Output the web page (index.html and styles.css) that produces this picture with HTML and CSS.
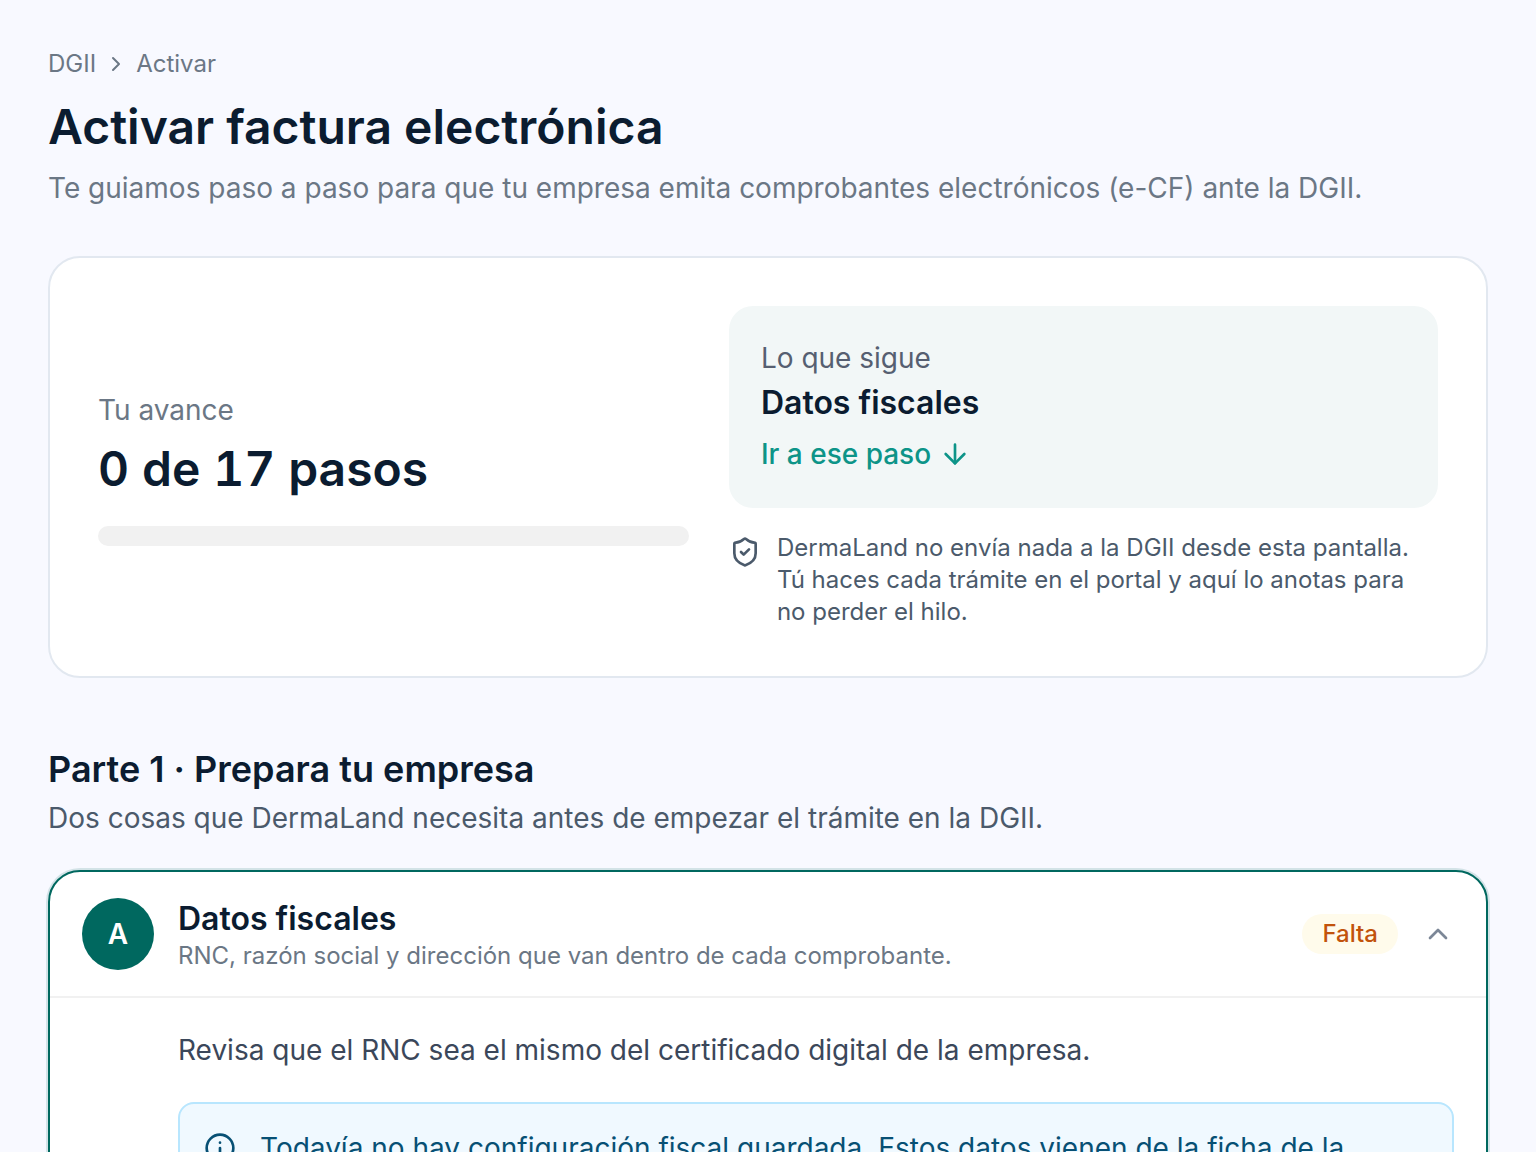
FILE: index.html
```html
<!DOCTYPE html>
<html lang="es">
<head>
    <meta charset="UTF-8">
    <meta name="viewport" content="width=device-width, initial-scale=1.0">
    <title>Activar factura electrónica</title>
    <link rel="stylesheet" href="styles.css">
</head>
<body>
    <main class="page">
        <header class="page-header">
            <nav class="breadcrumb" aria-label="Ruta">
                <a href="#">DGII</a>
                <svg class="icon icon-small" viewBox="0 0 24 24"><path d="m9 18 6-6-6-6"></path></svg>
                <span>Activar</span>
            </nav>
            <h1>Activar factura electrónica</h1>
            <p class="subtitle">Te guiamos paso a paso para que tu empresa emita comprobantes electrónicos (e-CF) ante la DGII.</p>
        </header>

        <section class="summary">
            <div class="progress">
                <p class="progress-label" id="progressLabel">Tu avance</p>
                <p class="progress-count">0 de 17 pasos</p>
                <div class="progress-bar" role="progressbar" aria-labelledby="progressLabel" aria-valuemin="0" aria-valuemax="17" aria-valuenow="0"></div>
            </div>
            <div class="summary-side">
                <div class="next-step">
                    <p class="next-label">Lo que sigue</p>
                    <p class="next-title">Datos fiscales</p>
                    <a class="next-link" href="#paso-a">
                        Ir a ese paso
                        <svg class="icon" viewBox="0 0 24 24"><path d="M12 5v14"></path><path d="m19 12-7 7-7-7"></path></svg>
                    </a>
                </div>
                <div class="note">
                    <svg class="icon" viewBox="0 0 24 24"><path d="M20 13c0 5-3.5 7.5-7.66 8.95a1 1 0 0 1-.67-.01C7.5 20.5 4 18 4 13V6a1 1 0 0 1 1-1c2 0 4.5-1.2 6.24-2.72a1.17 1.17 0 0 1 1.52 0C14.51 3.81 17 5 19 5a1 1 0 0 1 1 1z"></path><path d="m9 12 2 2 4-4"></path></svg>
                    <p>DermaLand no envía nada a la DGII desde esta pantalla. Tú haces cada trámite en el portal y aquí lo anotas para no perder el hilo.</p>
                </div>
            </div>
        </section>

        <section class="part">
            <h2>Parte 1 · Prepara tu empresa</h2>
            <p class="part-text">Dos cosas que DermaLand necesita antes de empezar el trámite en la DGII.</p>

            <article class="step" id="paso-a">
                <button type="button" class="step-header" aria-expanded="true" aria-controls="stepBody">
                    <span class="step-letter">A</span>
                    <span class="step-heading">
                        <span class="step-title">Datos fiscales</span>
                        <span class="step-desc">RNC, razón social y dirección que van dentro de cada comprobante.</span>
                    </span>
                    <span class="badge">Falta</span>
                    <svg class="icon step-chevron" viewBox="0 0 24 24"><path d="m18 15-6-6-6 6"></path></svg>
                </button>
                <div class="step-body" id="stepBody">
                    <p>Revisa que el RNC sea el mismo del certificado digital de la empresa.</p>
                    <div class="alert">
                        <svg class="icon" viewBox="0 0 24 24"><circle cx="12" cy="12" r="10"></circle><path d="M12 16v-4"></path><path d="M12 8h.01"></path></svg>
                        <p>Todavía no hay configuración fiscal guardada. Estos datos vienen de la ficha de la empresa.</p>
                    </div>
                </div>
            </article>
        </section>
    </main>
</body>
</html>
```
FILE: styles.css
```css
/* General Styles */
* {
    box-sizing: border-box;
}

body {
    margin: 0;
    font-family: 'Inter', sans-serif;
    font-size: 28px;
    line-height: 40px;
    background: #f8f9ff;
    color: #0b1c30;
}

h1, h2, p {
    margin: 0;
}

a {
    color: inherit;
    text-decoration: none;
}

.page {
    padding: 48px;
}

.icon {
    width: 32px;
    height: 32px;
    flex-shrink: 0;
    fill: none;
    stroke: currentColor;
    stroke-width: 2;
    stroke-linecap: round;
    stroke-linejoin: round;
}

.icon-small {
    width: 24px;
    height: 24px;
}

/* Page header */
.breadcrumb {
    display: flex;
    align-items: center;
    gap: 8px;
    margin-bottom: 16px;
    font-size: 24px;
    line-height: 32px;
    color: #6b7785;
}

h1 {
    font-size: 48px;
    line-height: 62px;
    font-weight: 600;
    margin-bottom: 10px;
}

.subtitle {
    color: #6b7785;
}

/* Progress summary */
.summary {
    display: grid;
    grid-template-columns: 1fr 1.2fr;
    align-items: center;
    gap: 40px;
    margin-top: 48px;
    padding: 48px;
    background: #ffffff;
    border: 2px solid #e2e8f0;
    border-radius: 32px;
}

.progress-label {
    line-height: 44px;
    color: #6b7785;
}

.progress-count {
    margin: 2px 0 22px;
    font-size: 48px;
    line-height: 70px;
    font-weight: 600;
    font-variant-numeric: tabular-nums;
}

.progress-bar {
    height: 20px;
    background: #f1f1f1;
    border-radius: 10px;
}

.next-step {
    padding: 32px;
    background: #f2f7f7;
    border-radius: 24px;
}

.next-label {
    color: #565f71;
}

.next-title {
    margin-bottom: 4px;
    font-size: 32px;
    line-height: 50px;
    font-weight: 600;
}

.next-link {
    display: flex;
    align-items: center;
    gap: 8px;
    width: fit-content;
    line-height: 44px;
    font-weight: 500;
    color: #0d9488;
}

.note {
    display: flex;
    gap: 16px;
    margin-top: 24px;
    font-size: 24px;
    line-height: 32px;
    color: #4b5a6b;
}

.note .icon {
    margin-top: 4px;
}

/* Steps */
.part {
    margin-top: 64px;
}

h2 {
    font-size: 36px;
    line-height: 54px;
    font-weight: 600;
    margin-bottom: 2px;
}

.part-text {
    color: #4b5a6b;
}

.step {
    margin-top: 32px;
    background: #ffffff;
    border: 2px solid #00685f;
    border-radius: 32px;
    box-shadow: 0 0 0 2px rgba(0, 104, 95, 0.15);
}

.step-header {
    display: flex;
    align-items: center;
    gap: 24px;
    width: 100%;
    padding: 24px 32px;
    font: inherit;
    color: inherit;
    text-align: left;
    background: none;
    border: none;
    border-bottom: 2px solid #f1f1f1;
    cursor: pointer;
}

.step-letter {
    display: flex;
    align-items: center;
    justify-content: center;
    width: 72px;
    height: 72px;
    flex-shrink: 0;
    font-weight: 600;
    color: #ffffff;
    background: #00685f;
    border-radius: 50%;
}

.step-heading {
    flex: 1;
    padding-top: 2px;
}

.step-title {
    display: block;
    font-size: 32px;
    line-height: 42px;
    font-weight: 600;
}

.step-desc {
    display: block;
    font-size: 24px;
    line-height: 32px;
    color: #6b7785;
}

.badge {
    padding: 4px 20px;
    font-size: 24px;
    line-height: 32px;
    font-weight: 500;
    color: #c2530c;
    background: #fffbeb;
    border-radius: 20px;
}

.step-chevron {
    color: #7c8797;
}

.step-body {
    padding: 32px 32px 32px 128px;
    color: #3b475a;
}

.alert {
    display: flex;
    gap: 24px;
    margin-top: 32px;
    padding: 24px;
    color: #075074;
    background: #f0f9ff;
    border: 2px solid #b8e6fe;
    border-radius: 16px;
}

.alert .icon {
    margin-top: 4px;
}

/* Stack the summary on narrow screens */
@media (max-width: 900px) {
    .summary {
        grid-template-columns: 1fr;
    }
}
```
